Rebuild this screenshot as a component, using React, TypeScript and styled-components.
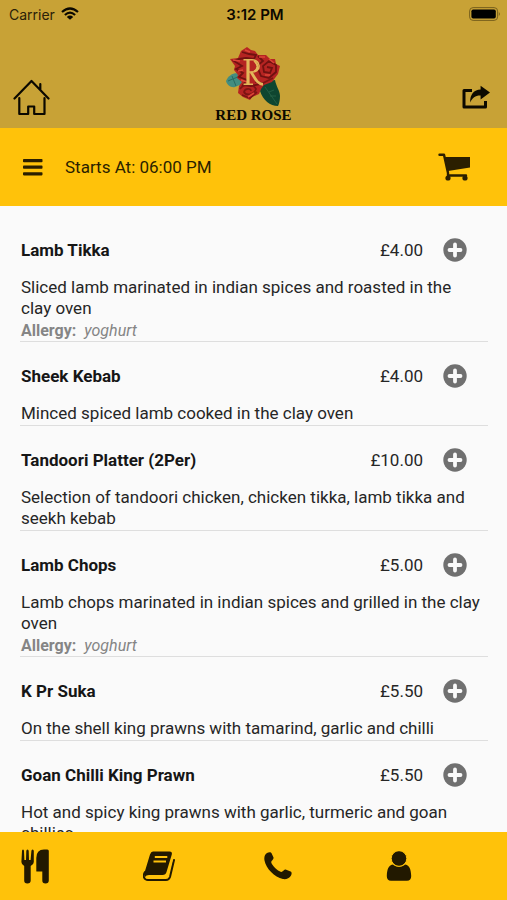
import React from "react";
import styled, { createGlobalStyle } from "styled-components";

const GlobalStyle = createGlobalStyle`
  * { box-sizing: border-box; }
  body { margin: 0; background: #fafafa; }
  button { border: 0; padding: 0; background: none; color: inherit; font: inherit; cursor: pointer; }
`;

const Screen = styled.div`
  height: 100vh;
  display: flex;
  flex-direction: column;
  overflow: hidden;
  background: #fafafa;
  color: #262626;
  font-family: Roboto, sans-serif;
  font-size: 17px;
  line-height: 21px;
`;

const Header = styled.header`
  flex: none;
  background: #c8a236;
  color: #0c0900;
`;

const StatusBar = styled.div`
  display: grid;
  grid-template-columns: 1fr auto 1fr;
  align-items: center;
  height: 28px;
  padding: 0 6px 0 9px;
  font-family: Inter, sans-serif;
  font-size: 14px;
`;

const Carrier = styled.span`
  display: flex;
  align-items: center;
  gap: 6px;
  color: #2a2008;
`;

const Clock = styled.time`
  font-size: 15px;
  font-weight: 600;
`;

const Battery = styled.span`
  display: flex;
  justify-content: flex-end;
`;

const BrandRow = styled.div`
  display: grid;
  grid-template-columns: 1fr auto 1fr;
  align-items: end;
  height: 100px;
  padding: 0 13px 6px;
`;

const Brand = styled.div`
  display: flex;
  flex-direction: column;
  align-items: center;
  font-family: "Liberation Serif", serif;
  font-size: 15px;
  line-height: 14px;
  font-weight: 700;
`;

const IconButton = styled.button`
  display: flex;
`;

const HomeButton = styled(IconButton)`
  justify-self: start;
  padding-bottom: 6px;
`;

const ShareButton = styled(IconButton)`
  justify-self: end;
  padding: 0 4px 13px 0;
`;

const Toolbar = styled.div`
  flex: none;
  display: flex;
  align-items: center;
  height: 78px;
  padding: 0 36px 0 23px;
  background: #ffc20a;
  color: #2b1f00;
`;

const StartTime = styled.span`
  flex: 1;
  padding-left: 22px;
`;

const Menu = styled.main`
  flex: 1;
  min-height: 0;
  overflow: hidden;
  padding: 10px 19px 0 20px;
`;

const Dish = styled.article`
  padding: 22px 0 1px 1px;
  border-bottom: 1px solid #dedede;
`;

const DishHead = styled.div`
  display: flex;
  align-items: center;
  height: 24px;
  padding-right: 21px;
  margin-bottom: 15px;
`;

const DishName = styled.h2`
  flex: 1;
  margin: 0;
  font-size: 17px;
  font-weight: 700;
  color: #161616;
`;

const Price = styled.span`
  margin-right: 20px;
`;

const Description = styled.p`
  margin: 0;
  padding-right: 5px;
`;

const Allergy = styled.p`
  margin: 0;
  padding-top: 2px;
  color: #858585;
  font-size: 16px;
  line-height: 19px;

  strong {
    margin-right: 8px;
  }
`;

const TabBar = styled.nav`
  flex: none;
  display: grid;
  grid-template-columns: repeat(4, 1fr);
  height: 68px;
  padding-left: 21px;
  background: #ffc20a;
  color: #221900;
`;

const Tab = styled.button`
  display: flex;
  align-items: center;
`;

const WifiIcon = () => (
  <svg width="18" height="14" viewBox="0 0 18 14" fill="none" stroke="#0c0900" strokeWidth="2.2">
    <path d="M1 5Q9-2 17 5M3.9 8Q9 3.3 14.1 8" />
    <path d="M9 12.8 5.8 9.9Q9 7.3 12.2 9.9Z" fill="#0c0900" stroke="none" />
  </svg>
);

const BatteryIcon = () => (
  <svg width="32" height="14" viewBox="0 0 32 14">
    <rect x=".6" y=".6" width="28" height="12.8" rx="3.5" fill="none" stroke="#78601d" />
    <rect x="2.4" y="2.4" width="24.4" height="9.2" rx="1.8" fill="#000" />
    <path d="M29.8 5Q32 7 29.8 9Z" fill="#78601d" />
  </svg>
);

const HomeIcon = () => (
  <svg width="38" height="37" viewBox="0 0 38 37" fill="none" stroke="#0c0900" strokeWidth="2.2" strokeLinecap="round" strokeLinejoin="round">
    <path d="M1.5 19.5 18.5 2 35.5 19.5M27.3 10.5V5" />
    <path d="M6.3 19V35H15.2V27.5H21.2V35H31.5V19" />
  </svg>
);

const ShareIcon = () => (
  <svg width="28" height="24" viewBox="0 0 28 24">
    <path d="M10 5.5H2V22H23.5V16" fill="none" stroke="#0c0900" strokeWidth="3" strokeLinejoin="round" />
    <path d="M18.6.8 28 7.5 18.6 14.5V10.6C13.5 10.4 10.5 12.8 8.2 17.4 7.8 9.5 12 4.7 18.6 4.5Z" fill="#0c0900" />
  </svg>
);

const RoseLogo = () => (
  <svg width="56" height="61" viewBox="0 0 56 61">
    <path d="M35 38C41 37 45 33 49 33 50 39 54 44 54 49 54 53 53 57 52 59 44 59 37 53 34 44Z" fill="#0f4630" />
    <path d="M39 40 51 57M43 45 48 43M44 49 50 49" stroke="#28654a" fill="none" strokeWidth=".8" />
    <path d="M15 27C9 25 3 27 0 34 1 38 5 41 9 40L16 37Z" fill="#438d80" />
    <path d="M2 34 14 29M6 29 10 39" stroke="#286a61" fill="none" />
    <path d="M4 12 12 11 15 4 21 0 25 3 29 4 32 8 40 8 44 12 49 12 50 17 54 19 52 27 46 35 38 38 35 42 33 47 26 50 24 53 17 50 12 46 13 39 16 35 11 31 12 28 8 23 9 19Z" fill="#b52422" />
    <path d="M16 5 23 7 30 8 28 12 20 11 13 12 8 14 16 19 10 22 17 26 13 30 21 33 17 38 25 39 34 37M32 9 37 14 31 19 35 29 43 31 50 25 50 18 43 14 37 19 38 25 44 26 46 21 41 20" fill="none" stroke="#701210" strokeWidth="1.8" />
    <path d="M14 42C17 37 27 36 30 42 28 48 20 49 18 45 19 41 25 41 25 44M16 48 24 51 31 45M29 35 37 36 47 31" fill="none" stroke="#7c1513" strokeWidth="1.7" />
    <path d="M7 13 14 14M19 3 24 5M12 24 17 23M15 33 21 35M43 12 48 16M28 46 22 50M39 28 44 28M33 10 39 10" stroke="#dd4437" strokeWidth="1.6" fill="none" />
    <g fill="none" stroke="#e3b65a">
      <path d="M22 13V37" strokeWidth="3.2" />
      <path d="M17.5 12.8H26C35.5 12.8 35.5 25 26 25H22M17.5 37.3H27" strokeWidth="1.5" />
      <path d="M25 25C29 31 31 37 37 37.3" strokeWidth="2.8" />
      <path d="M28 14C33 17 32 23 28 24.3" strokeWidth="2" />
    </g>
  </svg>
);

const BarsIcon = () => (
  <svg width="20" height="17" viewBox="0 0 20 17" fill="currentColor">
    <rect y="0" width="19.5" height="3.2" rx=".8" />
    <rect y="6.6" width="19.5" height="3.2" rx=".8" />
    <rect y="13.2" width="19.5" height="3.2" rx=".8" />
  </svg>
);

const CartIcon = () => (
  <svg width="33" height="28" viewBox="0 0 33 28">
    <path d="M1.5 1.7H6L10 20V22.5H28" fill="none" stroke="currentColor" strokeWidth="2.4" strokeLinecap="round" strokeLinejoin="round" />
    <path d="M7 4H32V14.6L10 18Z" fill="currentColor" />
    <circle cx="10" cy="25" r="2.6" fill="currentColor" />
    <circle cx="27" cy="25" r="2.6" fill="currentColor" />
  </svg>
);

const PlusIcon = () => (
  <svg width="24" height="24" viewBox="0 0 24 24">
    <circle cx="12" cy="12" r="11.7" fill="#707070" />
    <path d="M12 6.5V17.5M6.5 12H17.5" stroke="#fafafa" strokeWidth="3.8" strokeLinecap="round" />
  </svg>
);

const CutleryIcon = () => (
  <svg width="29" height="35" viewBox="0 0 29 35" fill="currentColor">
    <path d="M1 2Q1 .5 2 .5T3 2L3.4 11H5L5.3 2Q5.4.5 6.5.5T7.7 2L8 11H9.6L10.4 2Q10.5.5 11.6.5T12.8 2V13Q12.8 15.5 9.7 17V31.5Q9.7 34.5 6.4 34.5T3.2 31.5V17Q.4 15.5.4 13Z" />
    <path d="M15.3 9Q15.3.5 23 .5H26.3Q27.8.5 27.8 2V31.5Q27.8 34.5 24.5 34.5T21.3 31.5V22.5H15.8Q15.3 22.5 15.3 22Z" />
  </svg>
);

const BookIcon = () => (
  <svg width="32" height="30" viewBox="0 0 32 30">
    <path d="M10 .5H26.5Q29.5.5 28.8 3.5L23.5 21Q22.8 24 19.5 24H6Q3 24 2 26 .8 23 2 20L7 3.5Q8 .5 10 .5Z" fill="currentColor" />
    <path d="M2 21C-.5 25 1 29 5 29H23Q26 29 27 26L31 9" fill="none" stroke="currentColor" strokeWidth="2" strokeLinecap="round" />
    <path d="M4 25.8H21.5Q24 25.8 25 22.5L29.8 6" fill="none" stroke="#ffc20a" strokeWidth="1.6" strokeLinecap="round" />
    <path d="M11.8 6H24.3M10.5 10.5H23" stroke="#ffc20a" strokeWidth="2" />
  </svg>
);

const PhoneIcon = () => (
  <svg width="28" height="28" viewBox="0 0 28 28" fill="currentColor">
    <path d="M3 1C5-.1 7-.1 7.7 1.4L9.5 5.6C10.1 7.4 7.2 8.7 7.2 10.2 8.2 13.8 13.3 18.5 17.1 20 18.7 20.3 20.1 17.1 22.2 17.7L26.6 19.5C28.2 20.3 27.7 22.4 26.7 24.1 25.4 26.3 22.1 27.7 18.9 27.1 10.5 25.2 2 16.7.5 8.6-.1 5.2.7 2.4 3 1Z" />
  </svg>
);

const PersonIcon = () => (
  <svg width="26" height="30" viewBox="0 0 26 30" fill="currentColor">
    <path d="M6.5 13.5Q13 18 19.5 13.5C23.3 14.5 25 18 25.2 25Q25.2 29.7 21 29.7H5Q.8 29.7.8 25C1 18 2.7 14.5 6.5 13.5Z" />
    <circle cx="13" cy="7.5" r="7.8" stroke="#ffc20a" strokeWidth="1" />
  </svg>
);

const dishes = [
  { name: "Lamb Tikka", price: "£4.00", text: "Sliced lamb marinated in indian spices and roasted in the clay oven", allergy: "yoghurt" },
  { name: "Sheek Kebab", price: "£4.00", text: "Minced spiced lamb cooked in the clay oven" },
  { name: "Tandoori Platter (2Per)", price: "£10.00", text: "Selection of tandoori chicken, chicken tikka, lamb tikka and seekh kebab" },
  { name: "Lamb Chops", price: "£5.00", text: "Lamb chops marinated in indian spices and grilled in the clay oven", allergy: "yoghurt" },
  { name: "K Pr Suka", price: "£5.50", text: "On the shell king prawns with tamarind, garlic and chilli" },
  { name: "Goan Chilli King Prawn", price: "£5.50", text: "Hot and spicy king prawns with garlic, turmeric and goan chillies" },
];

const tabs = [
  { label: "Menu", Icon: CutleryIcon },
  { label: "Orders", Icon: BookIcon },
  { label: "Call", Icon: PhoneIcon },
  { label: "Account", Icon: PersonIcon },
];

export default function App() {
  return (
    <Screen>
      <GlobalStyle />
      <Header>
        <StatusBar>
          <Carrier>Carrier <WifiIcon /></Carrier>
          <Clock>3:12 PM</Clock>
          <Battery><BatteryIcon /></Battery>
        </StatusBar>
        <BrandRow>
          <HomeButton aria-label="Home"><HomeIcon /></HomeButton>
          <Brand><RoseLogo />RED ROSE</Brand>
          <ShareButton aria-label="Share"><ShareIcon /></ShareButton>
        </BrandRow>
      </Header>
      <Toolbar>
        <IconButton aria-label="Open menu"><BarsIcon /></IconButton>
        <StartTime>Starts At: 06:00 PM</StartTime>
        <IconButton aria-label="Basket"><CartIcon /></IconButton>
      </Toolbar>
      <Menu>
        {dishes.map((d) => (
          <Dish key={d.name}>
            <DishHead>
              <DishName>{d.name}</DishName>
              <Price>{d.price}</Price>
              <IconButton aria-label={`Add ${d.name}`}><PlusIcon /></IconButton>
            </DishHead>
            <Description>{d.text}</Description>
            {d.allergy && (
              <Allergy><strong>Allergy:</strong><em>{d.allergy}</em></Allergy>
            )}
          </Dish>
        ))}
      </Menu>
      <TabBar>
        {tabs.map(({ label, Icon }) => (
          <Tab key={label} aria-label={label}><Icon /></Tab>
        ))}
      </TabBar>
    </Screen>
  );
}
